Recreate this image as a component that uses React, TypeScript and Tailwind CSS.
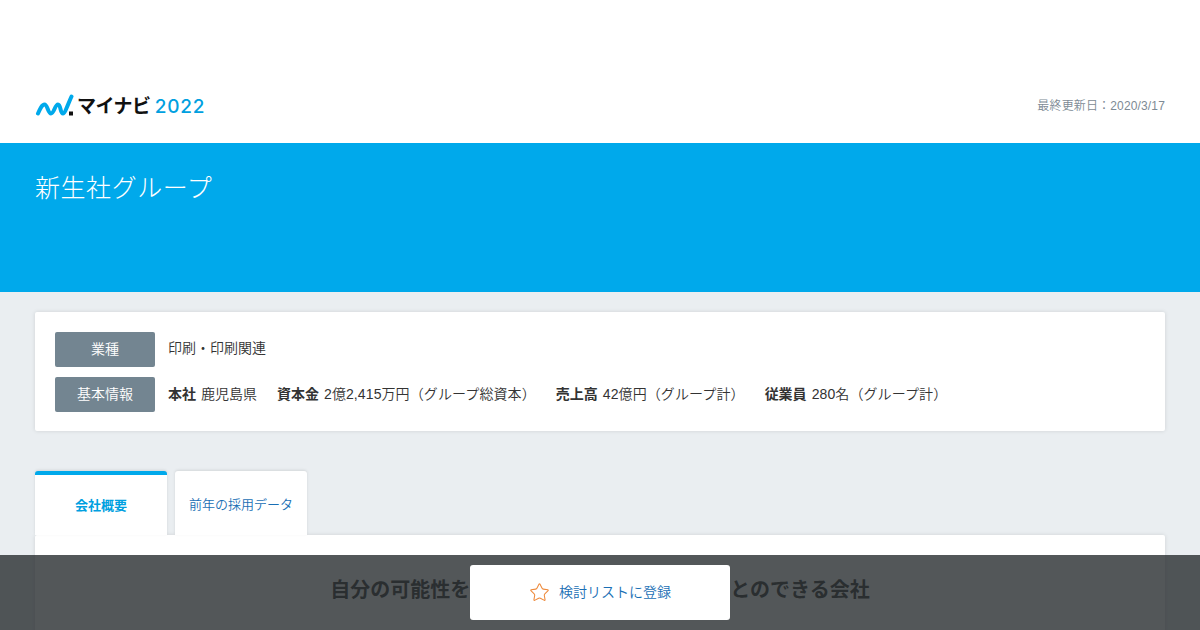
import React from 'react';
import { Star } from 'lucide-react';

const font = 'font-["Liberation_Sans","Noto_Sans_CJK_JP",sans-serif]';

const facts = [
  { label: '本社', value: '鹿児島県' },
  { label: '資本金', value: '2億2,415万円（グループ総資本）' },
  { label: '売上高', value: '42億円（グループ計）' },
  { label: '従業員', value: '280名（グループ計）' },
];

const Logo = () => (
  <div className="flex items-center">
    <svg width="39" height="24" viewBox="0 0 39 24" fill="none">
      <path d="M3 19.5 C5 15 7 10.5 9.5 10.5 C12.5 10.5 13 19.5 16 19.5 C19 19.5 20 10.5 23 10.5 C26 10.5 25 19.5 28 19.5 C30 19.5 33 10 36.5 2.5" stroke="#00a9eb" strokeWidth="4" strokeLinecap="round" />
      <rect x="34" y="17.5" width="4" height="4" fill="#111" />
    </svg>
    <span className="ml-[3px] text-[19px] leading-none font-bold text-[#111] tracking-[-0.5px]">マイナビ</span>
    <span className="ml-[4px] font-['Inter'] font-medium text-[19px] leading-none tracking-[0.8px] text-[#00a0e0]">2022</span>
  </div>
);

const InfoRow = ({ label, children }: { label: string; children: React.ReactNode }) => (
  <div className="flex items-center">
    <div className="w-[100px] h-[35px] flex items-center justify-center rounded-[2px] bg-[#738591] text-white text-[14px] font-[350]">{label}</div>
    <div className="ml-[13px] text-[14px] text-[#333] font-[350]">{children}</div>
  </div>
);

export default function App() {
  return (
    <div className={`${font} h-[630px] overflow-hidden bg-[#eaeef1]`}>
      <header className="h-[143px] bg-white px-[35px] pt-[94px] flex justify-between">
        <div className="h-[26px]"><Logo /></div>
        <p className="text-[12px] font-[350] text-[#7d8a94] tracking-[0.15px] leading-[22px] pt-[1px]">最終更新日：2020/3/17</p>
      </header>
      <div className="h-[149px] bg-[#00a9eb] px-[35px] pt-[27px]">
        <h1 className="text-[25px] leading-[36px] text-white tracking-[0.55px] font-light">新生社グループ</h1>
      </div>
      <div className="px-[35px] pt-[20px]">
        <section className="h-[119px] bg-white rounded-[2px] shadow-[0_0_4px_rgba(0,0,0,0.12)] px-[20px] pt-[20px] flex flex-col gap-[10px]">
          <InfoRow label="業種"><span className="relative -top-[1px]">印刷・印刷関連</span></InfoRow>
          <InfoRow label="基本情報">
            <div className="flex gap-[20px]">
              {facts.map((f, i) => (
                <span key={f.label}>
                  <b className="mr-[5px] font-bold">{f.label}</b>
                  <span className={i === 0 ? '' : 'tracking-[0.1px]'}>{f.value}</span>
                </span>
              ))}
            </div>
          </InfoRow>
        </section>
        {/* tabs sit above the card so its shadow doesn't cut across them */}
        <nav className="relative z-10 mt-[40px] flex gap-[8px] h-[64px]">
          <div className="w-[132px] pt-[2px] bg-white border-t-[4px] border-[#00a9eb] rounded-t-[3px] shadow-[0_-1px_3px_rgba(0,0,0,0.1)] flex items-center justify-center text-[13px] font-bold text-[#00a0e0]">会社概要</div>
          <div className="w-[132px] pt-[4px] bg-white rounded-t-[3px] shadow-[0_-1px_3px_rgba(0,0,0,0.1)] flex items-center justify-center text-[13px] font-[350] text-[#1a6fb5]">前年の採用データ</div>
        </nav>
        <section className="h-[300px] bg-white rounded-t-[2px] shadow-[0_0_4px_rgba(0,0,0,0.12)] pt-[40px] flex justify-center">
          <h2 className="flex gap-[260px] text-[20px] leading-[30px] font-bold text-[#333]">
            <span>自分の可能性を</span>
            <span>とのできる会社</span>
          </h2>
        </section>
      </div>
      <div className="fixed z-20 left-0 right-0 bottom-0 h-[75px] bg-[rgba(40,45,48,0.8)] flex items-center justify-center">
        <button className="w-[260px] h-[55px] bg-white rounded-[3px] flex items-center justify-center gap-[9px] text-[14px] font-[350] text-[#1a6fb5]">
          <Star size={21} strokeWidth={1.2} className="text-[#ee8a3c]" />
          検討リストに登録
        </button>
      </div>
    </div>
  );
}
